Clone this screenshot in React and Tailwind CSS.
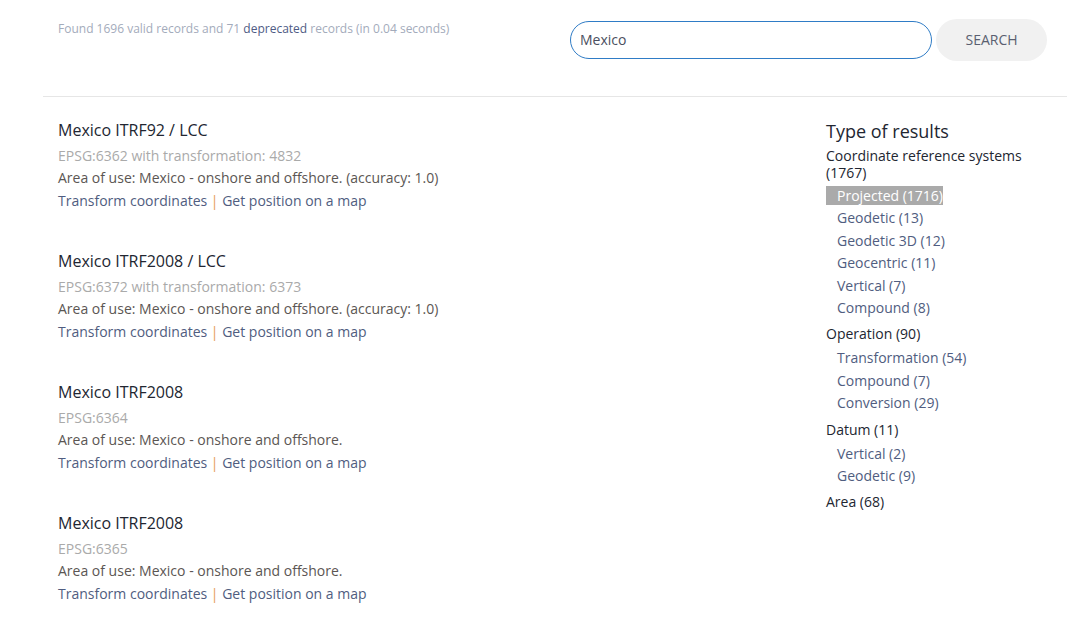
import React from "react";

const results = [
  { title: "Mexico ITRF92 / LCC", code: "EPSG:6362 with transformation: 4832", area: "Area of use: Mexico - onshore and offshore. (accuracy: 1.0)" },
  { title: "Mexico ITRF2008 / LCC", code: "EPSG:6372 with transformation: 6373", area: "Area of use: Mexico - onshore and offshore. (accuracy: 1.0)" },
  { title: "Mexico ITRF2008", code: "EPSG:6364", area: "Area of use: Mexico - onshore and offshore." },
  { title: "Mexico ITRF2008", code: "EPSG:6365", area: "Area of use: Mexico - onshore and offshore." },
];

const groups = [
  { name: "Coordinate reference systems (1767)", items: ["Projected (1716)", "Geodetic (13)", "Geodetic 3D (12)", "Geocentric (11)", "Vertical (7)", "Compound (8)"] },
  { name: "Operation (90)", items: ["Transformation (54)", "Compound (7)", "Conversion (29)"] },
  { name: "Datum (11)", items: ["Vertical (2)", "Geodetic (9)"] },
  { name: "Area (68)", items: [] },
];

export default function App() {
  return (
    <div className="w-[1081px] h-[618px] bg-white overflow-hidden" style={{ fontFamily: '"Open Sans", sans-serif' }}>
      <div className="ml-[43px] w-[1024px]">
        <div className="flex items-start justify-between h-[96px] border-b border-[#e6e6e6] box-content">
          <div className="pl-[15px] pt-[20px] text-[12px] leading-[18px] text-[#a3abbb]">
            Found 1696 valid records and 71 <span className="text-[#4e5b84]">deprecated</span> records (in 0.04 seconds)
          </div>
          <div className="flex items-center gap-[4px] pt-[19px] pr-[20px]">
            <div className="w-[362px] h-[38px] rounded-full border border-[#2f7cc6] flex items-center pl-[9px] pb-[1px] text-[14px] text-[#4a4f60]">
              Mexico
            </div>
            <div className="w-[111px] h-[42px] rounded-full bg-[#f1f1f1] flex items-center justify-center pb-[2px] text-[14px] text-[#5a5f70]">
              SEARCH
            </div>
          </div>
        </div>
        <div className="flex">
          <div className="w-[783px] pl-[15px] pt-[21px]">
            {results.map((r, i) => (
              <div key={i} className="mb-[36.8px]">
                <div className="text-[16px] leading-[24px] text-[#222631] mb-[3px]">{r.title}</div>
                <div className="text-[14px] leading-[22.4px] text-[#aaaaaa]">{r.code}</div>
                <div className="text-[14px] leading-[22.4px] text-[#5b5653]">{r.area}</div>
                <div className="text-[14px] leading-[22.4px] text-[#505d80]">
                  Transform coordinates <span className="text-[#e59a5a]">|</span> Get position on a map
                </div>
              </div>
            ))}
          </div>
          <div className="w-[220px] pt-[23px]">
            <div className="text-[18px] leading-[22px] text-[#222631] mb-[5px]">Type of results</div>
            {groups.map((g, gi) => (
              <div key={gi} className={gi === 0 ? "" : "mt-[6px]"}>
                <div className="text-[14px] leading-[17px] text-[#222631]">{g.name}</div>
                {g.items.length > 0 && (
                  <div className={gi === 0 ? "mt-[4px]" : "mt-[5px]"}>
                    {g.items.map((it, ii) => (
                      <div key={ii} className="text-[14px] leading-[22.4px]">
                        {gi === 0 && ii === 0 ? (
                          <span className="bg-[#aaaaaa] text-white pl-[11px]">{it}</span>
                        ) : (
                          <span className="pl-[11px] text-[#505d80]">{it}</span>
                        )}
                      </div>
                    ))}
                  </div>
                )}
              </div>
            ))}
          </div>
        </div>
      </div>
    </div>
  );
}
